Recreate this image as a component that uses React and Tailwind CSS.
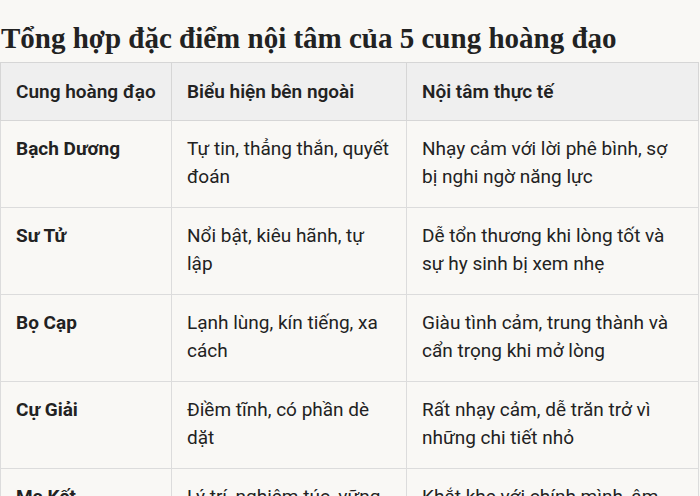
import React from 'react';

const rows = [
  ['Bạch Dương', 'Tự tin, thẳng thắn, quyết đoán', 'Nhạy cảm với lời phê bình, sợ bị nghi ngờ năng lực'],
  ['Sư Tử', 'Nổi bật, kiêu hãnh, tự lập', 'Dễ tổn thương khi lòng tốt và sự hy sinh bị xem nhẹ'],
  ['Bọ Cạp', 'Lạnh lùng, kín tiếng, xa cách', 'Giàu tình cảm, trung thành và cẩn trọng khi mở lòng'],
  ['Cự Giải', 'Điềm tĩnh, có phần dè dặt', 'Rất nhạy cảm, dễ trăn trở vì những chi tiết nhỏ'],
  ['Ma Kết', 'Lý trí, nghiêm túc, vững vàng', 'Khắt khe với chính mình, âm thầm chịu áp lực'],
];

export default function App() {
  return (
    <div className="h-[496px] bg-[#f9f8f5] text-[#222] overflow-hidden">
      <h2 className="pt-[20px] pb-[6px] pl-[1px] text-[29px] leading-[36px] font-bold font-['Liberation_Serif',serif] text-[#222]">
        Tổng hợp đặc điểm nội tâm của 5 cung hoàng đạo
      </h2>
      <table className="table-fixed border-collapse w-[699px] font-['Roboto',sans-serif] text-[19px] leading-[28px]">
        <colgroup>
          <col className="w-[171px]" />
          <col className="w-[235px]" />
          <col />
        </colgroup>
        <thead>
          <tr className="bg-[#efefef]">
            <th className="border border-[#d6d6d6] px-[15px] pt-[15px] pb-[14px] text-left font-semibold">Cung hoàng đạo</th>
            <th className="border border-[#d6d6d6] px-[15px] pt-[15px] pb-[14px] text-left font-semibold">Biểu hiện bên ngoài</th>
            <th className="border border-[#d6d6d6] px-[15px] pt-[15px] pb-[14px] text-left font-semibold">Nội tâm thực tế</th>
          </tr>
        </thead>
        <tbody>
          {rows.map((r) => (
            <tr key={r[0]}>
              <td className="border border-[#dcdcdc] px-[15px] pt-[14px] pb-[16px] align-top font-bold">{r[0]}</td>
              <td className="border border-[#dcdcdc] px-[15px] pt-[14px] pb-[16px] align-top">{r[1]}</td>
              <td className="border border-[#dcdcdc] px-[15px] pt-[14px] pb-[16px] align-top">{r[2]}</td>
            </tr>
          ))}
        </tbody>
      </table>
    </div>
  );
}
